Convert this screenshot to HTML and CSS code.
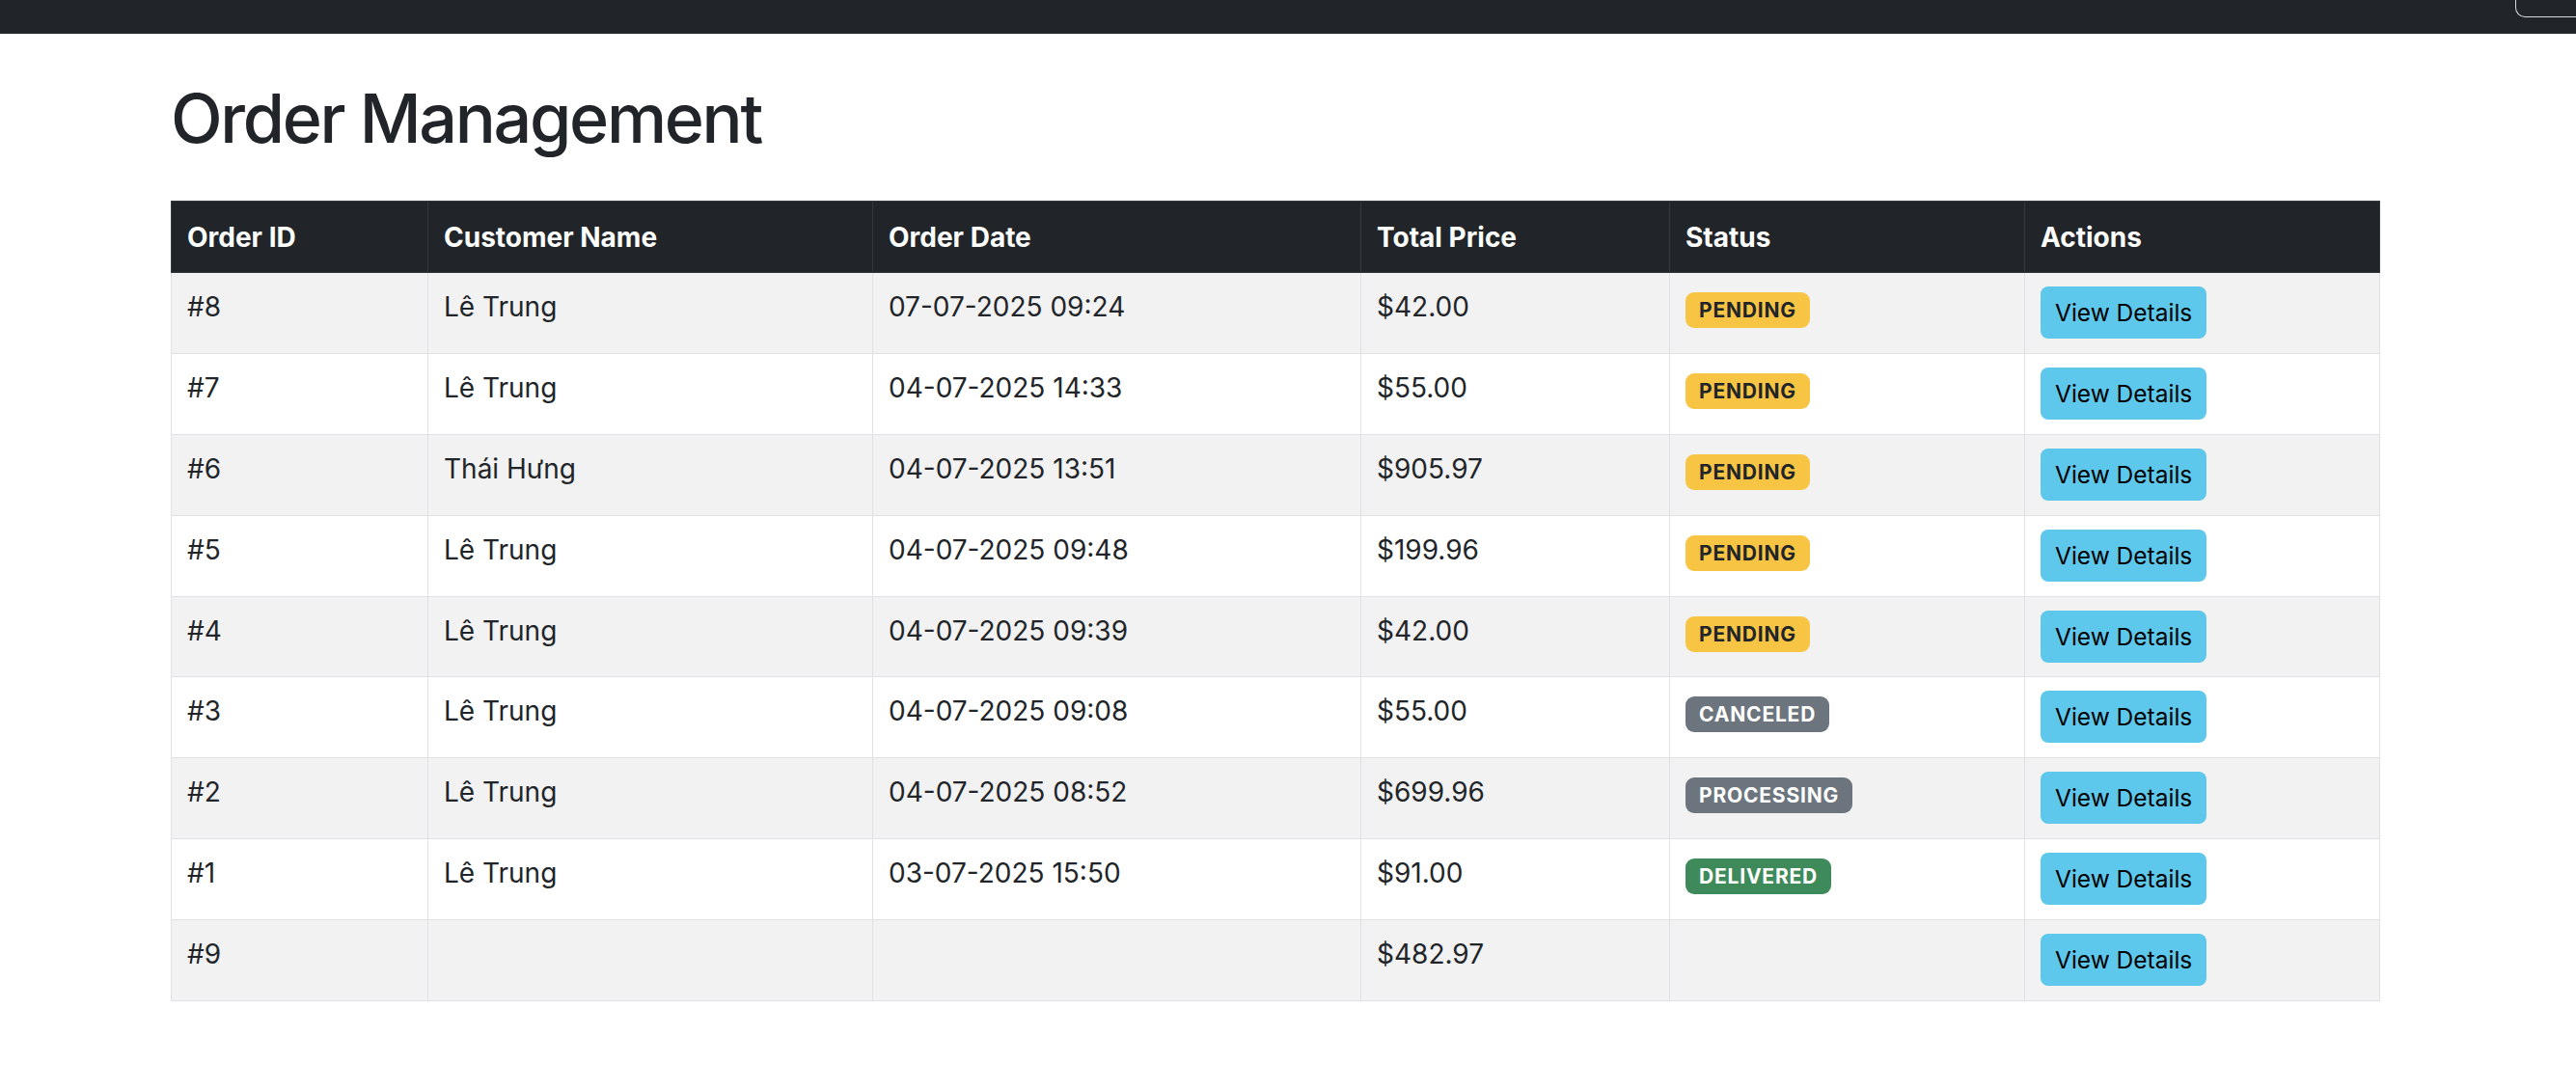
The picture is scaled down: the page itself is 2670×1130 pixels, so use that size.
FILE: index.html
```html
<!DOCTYPE html>
<html lang="vi">
<head>
<meta charset="utf-8">
<title>Order Management</title>
<link rel="stylesheet" href="styles.css">
</head>
<body>
<nav class="navbar">
  <span class="nav-toggle"></span>
</nav>
<main class="container">
  <h1 class="page-title">Order Management</h1>
  <table class="orders">
    <colgroup>
      <col class="c-id"><col class="c-name"><col class="c-date"><col class="c-price"><col class="c-status"><col class="c-actions">
    </colgroup>
    <thead>
      <tr><th>Order ID</th><th>Customer Name</th><th>Order Date</th><th>Total Price</th><th>Status</th><th>Actions</th></tr>
    </thead>
    <tbody>
      <tr><td>#8</td><td>Lê Trung</td><td>07-07-2025 09:24</td><td>$42.00</td><td><span class="badge warning">PENDING</span></td><td><a class="btn-info">View Details</a></td></tr>
      <tr><td>#7</td><td>Lê Trung</td><td>04-07-2025 14:33</td><td>$55.00</td><td><span class="badge warning">PENDING</span></td><td><a class="btn-info">View Details</a></td></tr>
      <tr><td>#6</td><td>Thái Hưng</td><td>04-07-2025 13:51</td><td>$905.97</td><td><span class="badge warning">PENDING</span></td><td><a class="btn-info">View Details</a></td></tr>
      <tr><td>#5</td><td>Lê Trung</td><td>04-07-2025 09:48</td><td>$199.96</td><td><span class="badge warning">PENDING</span></td><td><a class="btn-info">View Details</a></td></tr>
      <tr><td>#4</td><td>Lê Trung</td><td>04-07-2025 09:39</td><td>$42.00</td><td><span class="badge warning">PENDING</span></td><td><a class="btn-info">View Details</a></td></tr>
      <tr><td>#3</td><td>Lê Trung</td><td>04-07-2025 09:08</td><td>$55.00</td><td><span class="badge secondary">CANCELED</span></td><td><a class="btn-info">View Details</a></td></tr>
      <tr><td>#2</td><td>Lê Trung</td><td>04-07-2025 08:52</td><td>$699.96</td><td><span class="badge secondary">PROCESSING</span></td><td><a class="btn-info">View Details</a></td></tr>
      <tr><td>#1</td><td>Lê Trung</td><td>03-07-2025 15:50</td><td>$91.00</td><td><span class="badge success">DELIVERED</span></td><td><a class="btn-info">View Details</a></td></tr>
      <tr><td>#9</td><td></td><td></td><td>$482.97</td><td></td><td><a class="btn-info">View Details</a></td></tr>
    </tbody>
  </table>
</main>
</body>
</html>
```
FILE: styles.css
```css
* { box-sizing: border-box; }
html, body { margin: 0; padding: 0; }
body {
  font-family: Inter, "Noto Sans", "Liberation Sans", sans-serif;
  color: #212529;
  background: #fff;
  overflow-x: hidden;
}
.navbar {
  height: 35px;
  background: #212529;
  display: flex;
  justify-content: flex-end;
  align-items: flex-start;
}
.nav-toggle {
  display: block;
  width: 63px;
  height: 18px;
  border-left: 1.5px solid #d9dadb;
  border-bottom: 1.5px solid #d9dadb;
  border-bottom-left-radius: 10px;
}
.container {
  margin-left: 177px;
  width: 2289px;
  padding-top: 46px;
}
.page-title {
  margin: 0 0 43px;
  font-size: 70px;
  font-weight: 500;
  line-height: 84px;
  letter-spacing: -2.3px;
}
.orders {
  width: 2289px;
  table-layout: fixed;
  border-collapse: collapse;
  font-size: 28px;
}
.c-id { width: 266px; }
.c-name { width: 461px; }
.c-date { width: 506px; }
.c-price { width: 320px; }
.c-status { width: 368px; }
.c-actions { width: 368px; }
.orders th {
  background: #212529;
  color: #fff;
  font-weight: 700;
  text-align: left;
  height: 74px;
  padding: 0 16px;
  line-height: 42px;
  border: 1px solid #32383e;
  vertical-align: middle;
}
.orders td {
  height: 83.9px;
  padding: 14px 16px;
  line-height: 42px;
  vertical-align: top;
  border: 1px solid #dee2e6;
}
.orders tbody tr:nth-child(odd) td { background: #f2f2f2; }
.badge {
  display: inline-block;
  vertical-align: top;
  margin-top: 6px;
  padding: 0 14px;
  height: 37px;
  line-height: 37px;
  font-size: 21px;
  font-weight: 700;
  letter-spacing: 0.8px;
  border-radius: 9px;
}
.badge.warning { background: #f7c444; color: #212529; }
.badge.secondary { background: #6c757d; color: #fff; }
.badge.success { background: #3f8a5a; color: #fff; }
.btn-info {
  display: inline-block;
  vertical-align: top;
  height: 54px;
  line-height: 54px;
  padding: 0 15px;
  font-size: 24.5px;
  color: #000;
  background: #5dc8ec;
  border-radius: 8px;
  text-decoration: none;
}
```
